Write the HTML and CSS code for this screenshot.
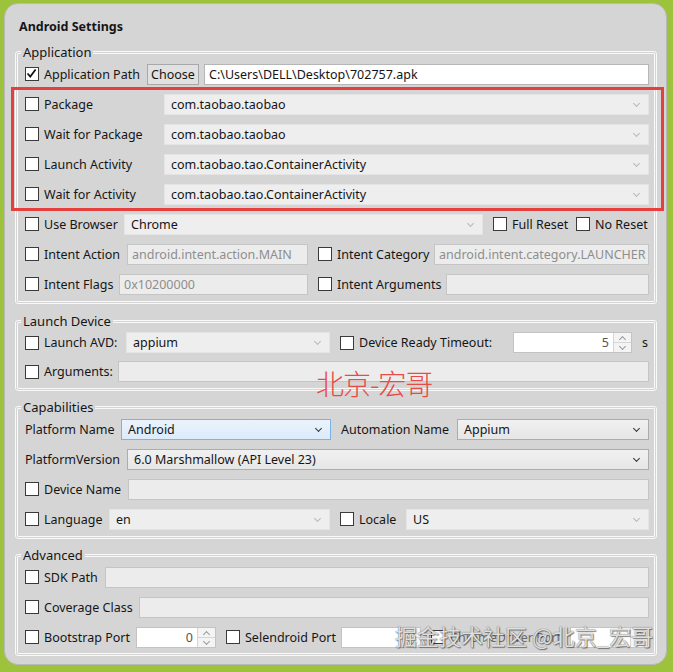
FILE: index.html
```html
<!DOCTYPE html>
<html>
<head>
    <meta charset="UTF-8">
    <title>Android Settings</title>
    <link rel="stylesheet" href="styles.css">
</head>
<body>
<div class="win">
    <div class="title">Android Settings</div>

    <!-- Application -->
    <fieldset class="group">
        <legend>Application</legend>
        <div class="row">
            <label class="lead w122"><span class="chk"><svg width="11" height="11" viewBox="0 0 11 11"><path d="M1.5 5.5 L4.3 8.6 L9.6 1.6" fill="none" stroke="#111" stroke-width="1.7"/></svg></span>Application Path</label>
            <span class="btn">Choose</span>
            <span class="field white grow">C:\Users\DELL\Desktop\702757.apk</span>
        </div>
        <div class="marked">
            <div class="row">
                <label class="lead w139"><span class="chk"></span>Package</label>
                <span class="combo grow">com.taobao.taobao</span>
            </div>
            <div class="row">
                <label class="lead w139"><span class="chk"></span>Wait for Package</label>
                <span class="combo grow">com.taobao.taobao</span>
            </div>
            <div class="row">
                <label class="lead w139"><span class="chk"></span>Launch Activity</label>
                <span class="combo grow">com.taobao.tao.ContainerActivity</span>
            </div>
            <div class="row">
                <label class="lead w139"><span class="chk"></span>Wait for Activity</label>
                <span class="combo grow">com.taobao.tao.ContainerActivity</span>
            </div>
        </div>
        <div class="row">
            <label class="lead w99"><span class="chk"></span>Use Browser</label>
            <span class="combo f359">Chrome</span>
            <label class="lead next w83"><span class="chk"></span>Full Reset</label>
            <label class="lead"><span class="chk"></span>No Reset</label>
        </div>
        <div class="row">
            <label class="lead w102"><span class="chk"></span>Intent Action</label>
            <span class="field f181">android.intent.action.MAIN</span>
            <label class="lead next w116"><span class="chk"></span>Intent Category</label>
            <span class="field grow">android.intent.category.LAUNCHER</span>
        </div>
        <div class="row">
            <label class="lead w94"><span class="chk"></span>Intent Flags</label>
            <span class="field f189">0x10200000</span>
            <label class="lead next w128"><span class="chk"></span>Intent Arguments</label>
            <span class="field grow"></span>
        </div>
    </fieldset>

    <!-- Launch Device -->
    <fieldset class="group">
        <legend>Launch Device</legend>
        <div class="row tight">
            <label class="lead w101"><span class="chk"></span>Launch AVD:</label>
            <span class="combo f204">appium</span>
            <label class="lead next w173"><span class="chk"></span>Device Ready Timeout:</label>
            <span class="spin f119"><span class="num">5</span><span class="arrows"><i class="up"></i><i class="down"></i></span></span>
            <span class="unit">s</span>
        </div>
        <div class="row tight">
            <label class="lead w93"><span class="chk"></span>Arguments:</label>
            <span class="field grow"></span>
        </div>
    </fieldset>

    <!-- Capabilities -->
    <fieldset class="group caps">
        <legend>Capabilities</legend>
        <div class="row">
            <label class="lead w96">Platform Name</label>
            <span class="combo focus f210">Android</span>
            <label class="lead next w116">Automation Name</label>
            <span class="combo on grow">Appium</span>
        </div>
        <div class="row">
            <label class="lead w102">PlatformVersion</label>
            <span class="combo on grow">6.0 Marshmallow (API Level 23)</span>
        </div>
        <div class="row">
            <label class="lead w103"><span class="chk"></span>Device Name</label>
            <span class="field grow"></span>
        </div>
        <div class="row">
            <label class="lead w84"><span class="chk"></span>Language</label>
            <span class="combo f221">en</span>
            <label class="lead next w66"><span class="chk"></span>Locale</label>
            <span class="combo grow">US</span>
        </div>
    </fieldset>

    <!-- Advanced -->
    <fieldset class="group last">
        <legend>Advanced</legend>
        <div class="row">
            <label class="lead w80"><span class="chk"></span>SDK Path</label>
            <span class="field grow"></span>
        </div>
        <div class="row">
            <label class="lead w114"><span class="chk"></span>Coverage Class</label>
            <span class="field grow"></span>
        </div>
        <div class="row">
            <label class="lead w111"><span class="chk"></span>Bootstrap Port</label>
            <span class="spin f80"><span class="num">0</span><span class="arrows"><i class="up"></i><i class="down"></i></span></span>
            <label class="lead next w115"><span class="chk"></span>Selendroid Port</label>
            <span class="spin f80"><span class="num"></span><span class="arrows"><i class="up"></i><i class="down"></i></span></span>
            <label class="lead next w139"><span class="chk"></span><span class="faint">ChromeDriver Port</span></label>
            <span class="spin grow"><span class="num"></span><span class="arrows"><i class="up"></i><i class="down"></i></span></span>
        </div>
    </fieldset>

    <!-- watermarks -->
    <div class="stamp">北京-宏哥</div>
    <div class="credit">掘金技术社区 @北京_宏哥</div>
</div>
</body>
</html>
```

FILE: styles.css
```css
body {
    margin: 0;
    background-color: #9dc33c;
    font-family: "Noto Sans", "Liberation Sans", sans-serif;
    font-size: 12.5px;
    color: #151515;
}
.win {
    position: relative;
    box-sizing: border-box;
    height: 662px;
    margin: 3px 6px 0 4px;
    padding-top: 15px;
    background-color: #d5d5d5;
    border: 1px solid #b9b9b9;
    border-radius: 14px;
}
.title {
    margin: 0 0 10px 14px;
    font-weight: bold;
    font-size: 12.5px;
    line-height: 16px;
}
.group {
    margin: 0 9px 0 10px;
    padding: 0 5px 2px 7px;
    border: 3px double #f9f9f9;
    border-radius: 3px;
    min-width: 0;
}
.group + .group {
    margin-top: 10px;
}
.group.caps {
    margin-top: 9px;
}
.group.last {
    margin-top: 9px;
    padding-bottom: 1px;
}
legend {
    margin-left: -4px;
    padding: 0 2px;
    font-size: 13px;
    line-height: 14px;
}
.row {
    display: flex;
    align-items: center;
    height: 30px;
}
.row.tight {
    height: 29px;
}
.lead {
    display: flex;
    align-items: center;
    flex: none;
    white-space: nowrap;
}
.next {
    margin-left: 10px;
}
.chk {
    box-sizing: border-box;
    width: 14px;
    height: 14px;
    margin-right: 5px;
    flex: none;
    background: #fff;
    border: 1px solid #3a3a3a;
}
.chk svg {
    display: block;
}
.faint {
    color: #6a6a6a;
}

/* inputs */
.btn, .field, .combo, .spin {
    box-sizing: border-box;
    height: 21px;
    display: flex;
    align-items: center;
    white-space: nowrap;
    overflow: hidden;
    flex: none;
}
.grow {
    flex: 1;
    min-width: 0;
}
.btn {
    width: 52px;
    margin-right: 5px;
    justify-content: center;
    background: #e1e1e1;
    border: 1px solid #a8a8a8;
}
.field {
    padding: 0 4px;
    background: #ececec;
    border: 1px solid #c5c5c5;
    color: #8e8e8e;
}
.field.white {
    background: #fff;
    border-color: #b6b6b6;
    color: #151515;
}
.combo {
    position: relative;
    padding-left: 6px;
    background: #eeeeee;
    border: 1px solid #e4e4e4;
}
.combo::after {
    content: "";
    position: absolute;
    right: 9px;
    top: 6px;
    width: 4px;
    height: 4px;
    border-right: 1px solid #b8b8b8;
    border-bottom: 1px solid #b8b8b8;
    transform: rotate(45deg);
}
.combo.on {
    background: linear-gradient(#f1f1f1, #e6e6e6);
    border-color: #acacac;
}
.combo.focus {
    background: linear-gradient(#eaf3fc, #dcebfb);
    border-color: #7db2e8;
}
.combo.on::after, .combo.focus::after {
    border-color: #333;
}
.spin {
    background: #fff;
    border: 1px solid #c3c3c3;
    align-items: stretch;
}
.spin .num {
    flex: 1;
    text-align: right;
    padding-right: 4px;
    line-height: 19px;
    color: #555;
}
.arrows {
    width: 17px;
    display: flex;
    flex-direction: column;
    background: #f4f4f4;
    border-left: 1px solid #d6d6d6;
}
.arrows i {
    flex: 1;
    position: relative;
}
.arrows i + i {
    border-top: 1px solid #d6d6d6;
}
.arrows i::after {
    content: "";
    position: absolute;
    left: 6px;
    width: 4px;
    height: 4px;
    border-left: 1px solid #9a9a9a;
    border-top: 1px solid #9a9a9a;
}
.arrows .up::after {
    top: 4px;
    transform: rotate(45deg);
}
.arrows .down::after {
    top: 1px;
    transform: rotate(225deg);
}
.unit {
    margin-left: 10px;
}

/* column widths */
.w66 { width: 66px; }
.w80 { width: 80px; }
.w83 { width: 83px; }
.w84 { width: 84px; }
.w93 { width: 93px; }
.w94 { width: 94px; }
.w96 { width: 96px; }
.w99 { width: 99px; }
.w101 { width: 101px; }
.w102 { width: 102px; }
.w103 { width: 103px; }
.w111 { width: 111px; }
.w114 { width: 114px; }
.w115 { width: 115px; }
.w116 { width: 116px; }
.w122 { width: 122px; }
.w128 { width: 128px; }
.w139 { width: 139px; }
.w173 { width: 173px; }
.f80 { width: 80px; }
.f119 { width: 119px; }
.f181 { width: 181px; }
.f189 { width: 189px; }
.f204 { width: 204px; }
.f210 { width: 210px; }
.f221 { width: 221px; }
.f359 { width: 359px; }

/* red annotation round the four package rows */
.marked {
    position: relative;
}
.marked::after {
    content: "";
    position: absolute;
    left: -14px;
    right: -15px;
    top: -2px;
    bottom: -2px;
    border: 3px solid #e5403d;
    pointer-events: none;
}

/* watermarks */
.stamp {
    position: absolute;
    left: 311px;
    top: 363px;
    font-family: "Noto Sans CJK SC", sans-serif;
    font-size: 28px;
    line-height: 32px;
    font-weight: 300;
    letter-spacing: -1px;
    color: #e84a45;
}
.credit {
    position: absolute;
    left: 390px;
    top: 617px;
    font-family: "Noto Sans CJK SC", sans-serif;
    font-size: 22px;
    line-height: 28px;
    color: rgba(250, 250, 250, 0.85);
    text-shadow: 0 0 1px #444, 1px 1px 1px rgba(0, 0, 0, 0.45);
    white-space: nowrap;
}
```
